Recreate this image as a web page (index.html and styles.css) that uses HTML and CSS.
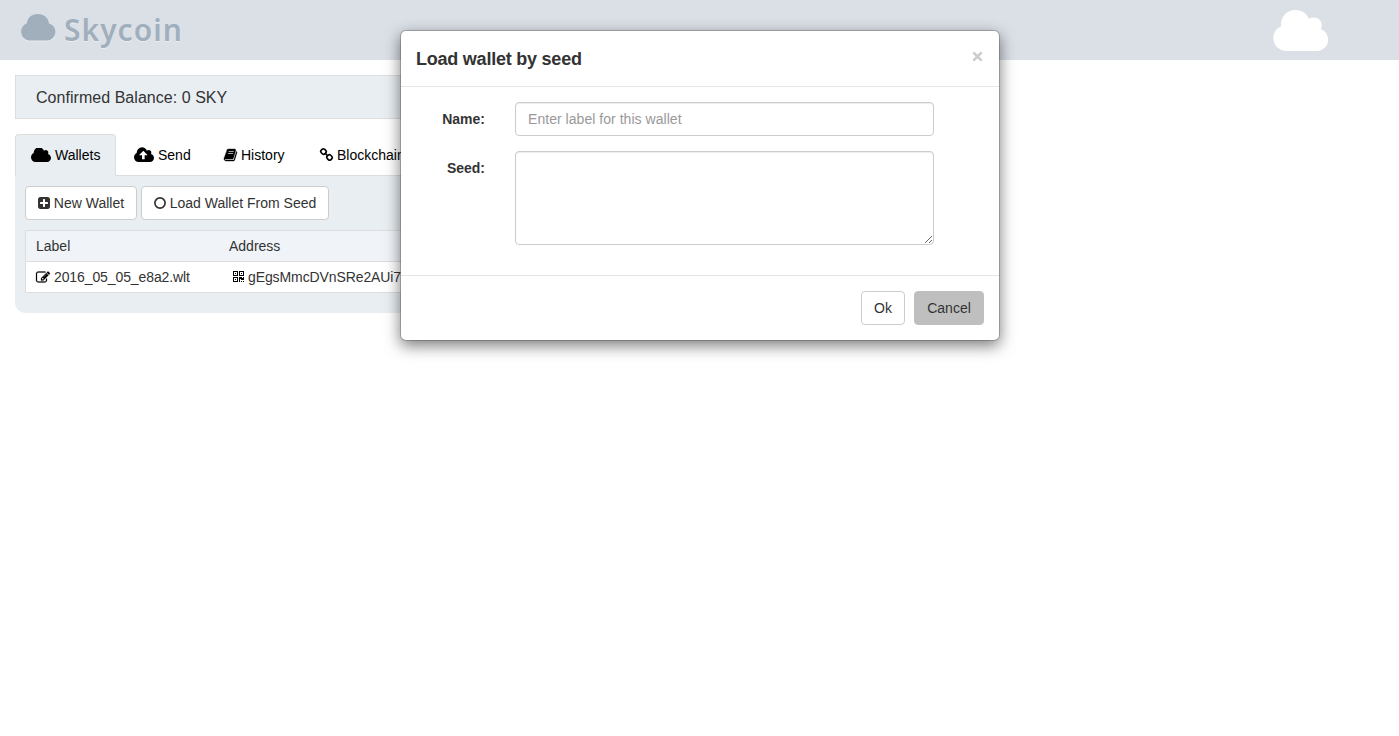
FILE: index.html
```html
<!DOCTYPE html>
<html lang="en">
<head>
<meta charset="utf-8">
<title>Skycoin</title>
<link rel="stylesheet" href="styles.css">
</head>
<body>
<svg class="defs" width="0" height="0">
  <symbol id="cloud" viewBox="0 256 1920 1344"><path d="M1920 1216q0 159-112.5 271.5t-271.5 112.5h-1088q-185 0-316.5-131.5t-131.5-316.5q0-130 70-240t188-165q-2-30-2-43 0-212 150-362t362-150q156 0 285.5 87t188.5 231q71-62 166-62 106 0 181 75t75 181q0 76-41 138 130 31 213.5 135.500t83.500 238.500z"/></symbol>
</svg>
<header class="topbar">
  <div class="brand">
    <svg class="brand-cloud" viewBox="0 0 36 28"><path d="M9 27.500a8.900 8.900 0 0 1-2.100-17.200C7.200 4.800 11.800 1 17.800 1s10.600 3.800 11.200 9.400A8.700 8.700 0 0 1 27 27.500z"/></svg>
    <span class="brand-name">Skycoin</span>
  </div>
  <svg class="top-cloud" viewBox="0 0 56 41"><path d="M12.500 41A12.900 12.900 0 0 1 8 16.300C7.400 6.500 14 0 22.500 0c6 0 11 3.300 13.500 8.800 6-3.500 13.200.5 12.600 6.700q0 2-.9 3.600A11.300 11.300 0 0 1 45 41z"/></svg>
</header>
<main class="page">
  <div class="balance">Confirmed Balance: 0 SKY</div>
  <nav class="tabs">
    <a class="tab tab-wallets active"><svg class="ic-cloud"><use href="#cloud"/></svg><span>Wallets</span></a>
    <a class="tab tab-send"><svg class="ic-cloud" viewBox="0 256 1920 1344"><path d="M1280 928q0-14-9-23l-352-352q-9-9-23-9t-23 9l-351 351q-10 12-10 24 0 14 9 23t23 9h224v352q0 13 9.500 22.500t22.500 9.500h192q13 0 22.500-9.500t9.500-22.500v-352h224q13 0 22.500-9.500t9.500-22.500zm640 288q0 159-112.500 271.500t-271.500 112.500h-1088q-185 0-316.500-131.500t-131.500-316.500q0-130 70-240t188-165q-2-30-2-43 0-212 150-362t362-150q156 0 285.500 87t188.500 231q71-62 166-62 106 0 181 75t75 181q0 76-41 138 130 31 213.500 135.500t83.500 238.500z"/></svg><span>Send</span></a>
    <a class="tab tab-history"><svg class="ic-book" viewBox="64 128 1664 1536"><path d="M1703 478q40 57 18 129l-275 906q-19 64-76.500 107.500t-122.500 43.500h-923q-77 0-148.500-53.500t-99.500-131.500q-24-67-2-127 0-4 3-27t4-37q1-8-3-21.500t-3-19.500q2-11 8-21t16.500-23.500 16.500-23.500q23-38 45-91.500t30-91.500q3-10 .5-30t-.5-28q3-11 17-28t17-23q21-36 42-92t25-90q1-9-2.500-32t.5-28q4-13 22-30.500t22-22.500q19-26 42.500-84.500t27.500-96.500q1-8-3-25.500t-2-26.500q2-8 9-18t18-23 17-21q8-12 16.500-30.500t15-35 16-36 19.500-32 26.500-23.500 36-11.500 47.500 5.500l-1 3q38-9 51-9h761q74 0 114 56t18 130l-274 906q-36 119-71.500 153.500t-128.500 34.500h-869q-27 0-38 15-11 16-1 43 24 70 144 70h923q29 0 56-15.500t35-41.500l300-987q7-22 5-57 38 15 59 43zm-1064 2q-4 13 2 22.500t20 9.500h608q13 0 25.500-9.500t16.500-22.500l21-64q4-13-2-22.500t-20-9.500h-608q-13 0-25.500 9.500t-16.500 22.500zm-83 256q-4 13 2 22.500t20 9.500h608q13 0 25.500-9.500t16.500-22.500l21-64q4-13-2-22.500t-20-9.500h-608q-13 0-25.500 9.500t-16.500 22.500z"/></svg><span>History</span></a>
    <a class="tab tab-chain"><svg class="ic-link" viewBox="0 0 13 13"><g fill="none" stroke="#000" stroke-width="1.600"><rect x=".9" y="1.200" width="5.200" height="4.800" rx="1.900" transform="rotate(45 3.500 3.600)"/><rect x="6.900" y="7" width="5.200" height="4.800" rx="1.900" transform="rotate(45 9.500 9.400)"/><path d="M4.800 4.900l3.400 3.300"/></g></svg><span>Blockchain</span></a>
  </nav>
  <section class="panel">
    <div class="actions">
      <button class="btn btn-new"><svg class="ic-12" viewBox="128 128 1536 1536"><path d="M1408 960v-128q0-26-19-45t-45-19h-320v-320q0-26-19-45t-45-19h-128q-26 0-45 19t-19 45v320h-320q-26 0-45 19t-19 45v128q0 26 19 45t45 19h320v320q0 26 19 45t45 19h128q26 0 45-19t19-45v-320h320q26 0 45-19t19-45zm256-544v960q0 119-84.500 203.500t-203.500 84.500h-960q-119 0-203.500-84.500t-84.500-203.500v-960q0-119 84.500-203.500t203.500-84.500h960q119 0 203.500 84.500t84.500 203.500z"/></svg><span>New Wallet</span></button>
      <button class="btn btn-load"><svg class="ic-12" viewBox="0 0 12 12"><circle cx="6" cy="6" r="5.100" fill="none" stroke="#333" stroke-width="1.700"/></svg><span>Load Wallet From Seed</span></button>
    </div>
    <div class="table">
      <div class="row head"><div class="cell">Label</div><div class="cell">Address</div></div>
      <div class="row">
        <div class="cell"><svg class="ic-edit" viewBox="0 256 1792 1280"><path d="M888 1184l116-116-152-152-116 116v56h96v96h56zm440-720q-16-16-33 1l-350 350q-17 17-1 33t33-1l350-350q17-17 1-33zm80 594v190q0 119-84.500 203.500t-203.500 84.500h-832q-119 0-203.500-84.500t-84.500-203.500v-832q0-119 84.500-203.500t203.500-84.500h832q63 0 117 25 15 7 18 23 3 17-9 29l-49 49q-14 14-32 8-23-6-45-6h-832q-66 0-113 47t-47 113v832q0 66 47 113t113 47h832q66 0 113-47t47-113v-126q0-13 9-22l64-64q15-15 35-7t20 29zm-96-738l288 288-672 672h-288v-288zm444 132l-92 92-288-288 92-92q28-28 68-28t68 28l152 152q28 28 28 68t-28 68z"/></svg><span class="file">2016_05_05_e8a2.wlt</span></div>
        <div class="cell"><svg class="ic-qr" viewBox="0 0 11 11" shape-rendering="crispEdges"><path fill-rule="evenodd" d="M0 0h5v5H0zM1 1v3h3V1zM6 0h5v5H6zM7 1v3h3V1zM0 6h5v5H0zM1 7v3h3V7zM2 2h1v1H2zM8 2h1v1H8zM2 8h1v1H2zM6 6h3v1h1V6h1v3H8V8H7v3H6zM8 10h1v1H8zM10 10h1v1h-1z"/></svg><span class="addr">gEgsMmcDVnSRe2AUi7</span></div>
      </div>
    </div>
  </section>
</main>
<div class="modal">
  <div class="modal-header"><h4>Load wallet by seed</h4><svg class="close" viewBox="0 0 11 11"><path d="M1.300 1.300l8.400 8.400M9.700 1.300l-8.400 8.400"/></svg></div>
  <div class="modal-body">
    <div class="field"><label>Name:</label><input class="control" type="text" placeholder="Enter label for this wallet"></div>
    <div class="field"><label>Seed:</label><textarea class="control area"></textarea></div>
  </div>
  <div class="modal-footer"><button class="btn btn-ok">Ok</button><button class="btn btn-cancel">Cancel</button></div>
</div>
</body>
</html>
```
FILE: styles.css
```css
* { box-sizing: border-box; }
body { margin: 0; height: 736px; overflow: hidden; background: #fff; color: #333; font: 14px/20px "Liberation Sans", Arial, sans-serif; }
svg { display: block; flex: none; overflow: visible; }
.defs { position: absolute; }
span { white-space: nowrap; }
.topbar { height: 60px; background: #dbe0e7; display: flex; justify-content: space-between; align-items: flex-start; padding: 10px 70px 0 20px; }
.brand { display: flex; gap: 9px; }
.brand-cloud { width: 36px; height: 28px; margin: 3px -1px 0 0; fill: #a1afbc; filter: drop-shadow(0 1px 0 #e7ebef); }
.brand-name { font: 600 30px/39px "Noto Sans", sans-serif; letter-spacing: 1px; color: #a1afbc; text-shadow: 0 1px 0 #e9edf1; }
.top-cloud { width: 56px; height: 41px; fill: #fff; }
.page { width: 700px; padding: 15px 0 0 15px; }
.balance { height: 44px; padding: 0 20px; border: 1px solid #ddd; background: #e9eef2; font-size: 16px; line-height: 43px; letter-spacing: .04px; }
.tabs { display: flex; gap: 2px; margin-top: 15px; height: 42px; border-bottom: 1px solid #ddd; color: #000; }
.tab { display: flex; align-items: center; height: 42px; padding: 0 15px; border: 1px solid transparent; border-radius: 4px 4px 0 0; gap: 4px; }
.active { background: #e9eef2; border-color: #ddd #ddd #e9eef2; }
.tab-wallets { width: 101px; }
.tab-send { width: 88px; }
.tab-history { width: 94px; }
.ic-cloud { width: 20px; height: 14px; }
.ic-book { width: 13px; height: 12px; stroke: #000; stroke-width: 50; }
.ic-link { width: 13px; height: 13px; margin-top: -1px; }
.ic-12 { width: 12px; height: 12px; fill: #333; }
.ic-edit { width: 14px; height: 11px; fill: #000; stroke: #000; stroke-width: 30; }
.ic-qr { width: 11px; height: 11px; margin: -1px 0 0 4px; fill: #000; }
.file { letter-spacing: -.1px; }
.addr { letter-spacing: -.1px; }
.panel { height: 137px; padding: 10px; background: #e9eef2; border-radius: 0 0 10px 10px; }
.actions { display: flex; gap: 4px; }
.btn { display: flex; align-items: center; justify-content: center; gap: 4px; height: 34px; padding: 0; border: 1px solid #ccc; border-radius: 4px; background: #fff; color: #333; font: inherit; }
.btn-new { width: 112px; }
.btn-load { width: 188px; }
.table { margin-top: 10px; border: 1px solid #ddd; }
.row { display: grid; grid-template-columns: 193px 1fr; height: 30px; background: #fff; }
.head { height: 31px; background: #f0f4f8; border-bottom: 1px solid #ddd; }
.cell { display: flex; align-items: center; gap: 4px; padding-left: 10px; }
.modal { position: absolute; left: 400px; top: 30px; width: 600px; height: 311px; background: #fff; background-clip: padding-box; border: 1px solid rgba(0,0,0,.2); border-radius: 6px; box-shadow: 0 5px 15px rgba(0,0,0,.5); }
.modal-header { display: flex; justify-content: space-between; height: 56px; padding: 15px; border-bottom: 1px solid #e5e5e5; }
.modal-header h4 { margin: 0; font-size: 18px; line-height: 26px; font-weight: 700; letter-spacing: -.23px; }
.close { width: 11px; height: 11px; margin: 5px 1px 0 0; fill: none; stroke: #ccc; stroke-width: 2.6; }
.modal-body { display: flex; flex-direction: column; gap: 15px; height: 188px; padding: 15px; }
.field { display: flex; }
.field label { width: 69px; margin-right: 30px; padding-top: 7px; text-align: right; font-weight: 700; }
.control { display: block; width: 419px; height: 34px; padding: 6px 12px; border: 1px solid #ccc; border-radius: 4px; background: #fff; box-shadow: inset 0 1px 1px rgba(0,0,0,.075); font: inherit; color: #555; }
.control::placeholder { color: #999; opacity: 1; letter-spacing: .04px; }
.area { height: 94px; }
.modal-footer { display: flex; justify-content: flex-end; gap: 9px; padding: 15px; border-top: 1px solid #e5e5e5; }
.btn-ok { width: 44px; }
.btn-cancel { width: 70px; background: #bfbfbf; border-color: #bfbfbf; }
```
